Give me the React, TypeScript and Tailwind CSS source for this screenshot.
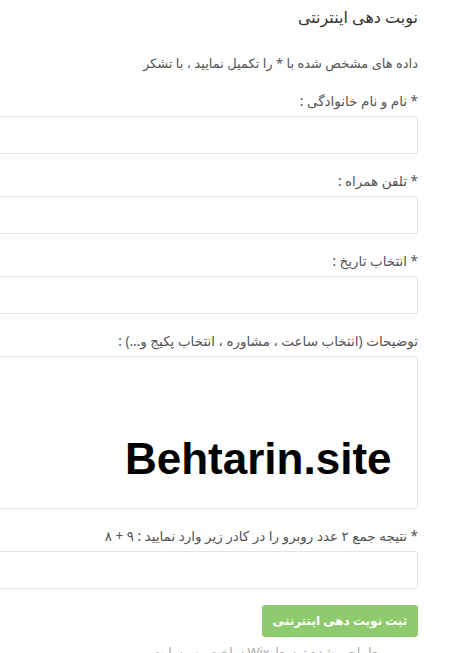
const FIELDS = [
  { label: "* نام و نام خانوادگی :" },
  { label: "* تلفن همراه :" },
  { label: "* انتخاب تاریخ :" },
];

const FONT = "font-['Noto_Sans','DejaVu_Sans',sans-serif]";

function Field({ label }: { label: string }) {
  return (
    <div className="flex flex-col">
      <label className="text-[13.5px] leading-[18px] text-[#555] h-[18px]">{label}</label>
      <div className="mt-[6px] h-[38px] rounded-[3px] border border-[#e3e3e3] bg-white" />
    </div>
  );
}

export default function App() {
  return (
    <div dir="rtl" className={`w-[465px] h-[653px] overflow-hidden bg-white ${FONT}`}>
      <div className="mr-[47px] -ml-[40px] flex flex-col">
        <h1 className="mt-[6px] text-[16px] leading-[22px] font-normal text-[#333]">نوبت دهی اینترنتی</h1>
        <p className="mt-[26px] text-[13px] leading-[18px] font-normal text-[#555]">
          داده های مشخص شده با * را تکمیل نمایید ، با تشکر
        </p>
        <div className="mt-[20px] flex flex-col gap-[18px]">
          {FIELDS.map((f) => (
            <Field key={f.label} label={f.label} />
          ))}
          <div className="flex flex-col">
            <label className="text-[13.5px] leading-[18px] text-[#555] h-[18px]">
              توضیحات (انتخاب ساعت ، مشاوره ، انتخاب پکیج و...) :
            </label>
            <div className="relative mt-[6px] h-[153px] rounded-[3px] border border-[#e3e3e3] bg-white">
              <span
                dir="ltr"
                className="absolute left-[164px] top-[78px] font-['Liberation_Sans',Arial,sans-serif] text-[44px] leading-[48px] font-bold text-black"
              >
                Behtarin.site
              </span>
            </div>
          </div>
          <Field label="* نتیجه جمع ۲ عدد روبرو را در کادر زیر وارد نمایید : ۹ + ۸" />
        </div>
        <div className="mt-[16px] flex">
          <button className="w-[156px] h-[32px] rounded-[3px] bg-[#8fcb6e] text-white text-[12px] font-bold">
            ثبت نوبت دهی اینترنتی
          </button>
        </div>
        <p className="mt-[6px] mr-[40px] text-[13px] text-[#aaa]">طراحی شده توسط Wix ساخت وب سایت</p>
      </div>
    </div>
  );
}
